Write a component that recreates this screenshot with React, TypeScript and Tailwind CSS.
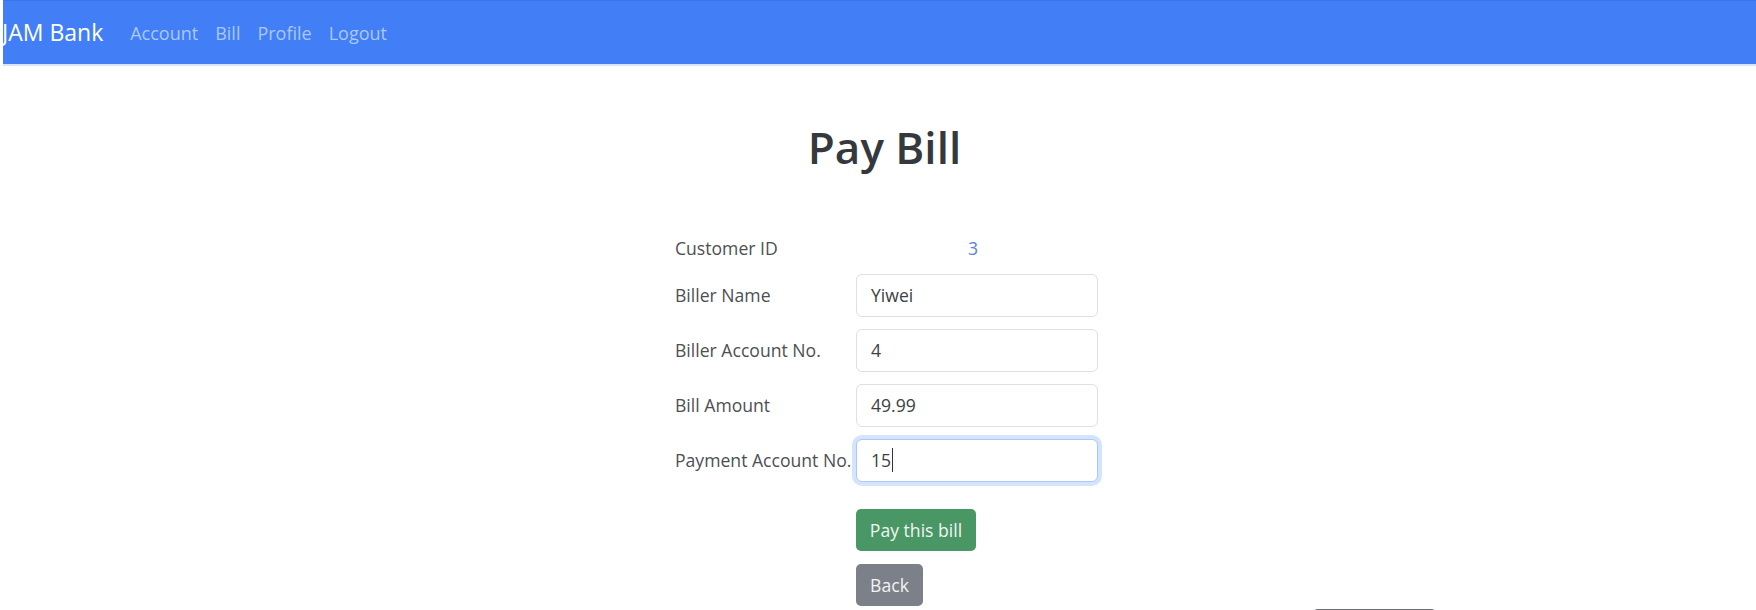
import React from "react";

const font = { fontFamily: '"Open Sans", "Noto Sans", "Liberation Sans", sans-serif' };

function Field({ label, value, focused }: { label: string; value: string; focused?: boolean }) {
  return (
    <div className="flex items-center h-[43px]">
      <div className="w-[181px] text-[17.6px] text-[#4d4f52] whitespace-nowrap">{label}</div>
      <div
        className={
          "w-[242px] h-[43px] rounded-[6px] bg-white flex items-center pl-[14px] text-[17.6px] text-[#3c3f43] " +
          (focused
            ? "border border-[#a9c8f8] shadow-[0_0_0_4px_rgba(66,133,244,0.22)]"
            : "border border-[#dde0e4]")
        }
      >
        <span>{value}</span>
        {focused && <span className="inline-block w-px h-[24px] bg-[#333] ml-px" />}
      </div>
    </div>
  );
}

export default function App() {
  return (
    <div className="w-[1756px] h-[610px] overflow-hidden bg-white" style={font}>
      <nav className="ml-[3px] h-[64px] bg-[#427ff7] flex items-center overflow-hidden border-t border-[#3b74e0]">
        <span className="text-[23px] text-white ml-[-1px] mr-[27px] leading-none">JAM Bank</span>
        <div className="flex items-center text-[18px] text-[#abc8fb] gap-[17px] mt-[1px]">
          <span>Account</span>
          <span>Bill</span>
          <span>Profile</span>
          <span>Logout</span>
        </div>
      </nav>
      <div className="h-[2px] ml-[3px] bg-[#d7e6fa]" />
      <h1 className="mt-[55px] text-center pl-[13px] text-[44px] leading-[1.2] font-semibold text-[#35383d]">
        Pay Bill
      </h1>
      <div className="ml-[675px] mt-[61px] w-[423px] flex flex-col">
        <div className="flex items-center h-[27px] text-[17.6px]">
          <div className="w-[181px] text-[#4d4f52]">Customer ID</div>
          <div className="w-[242px] pl-[112px] text-[#5b82d8]">3</div>
        </div>
        <div className="flex flex-col gap-[12px] mt-[12px]">
          <Field label="Biller Name" value="Yiwei" />
          <Field label="Biller Account No." value="4" />
          <Field label="Bill Amount" value="49.99" />
          <Field label="Payment Account No." value="15" focused />
        </div>
        <div className="ml-[181px] mt-[27px] flex flex-col items-start gap-[13px]">
          <button className="h-[42px] w-[120px] rounded-[5px] bg-[#489764] text-[#f2f5f3] text-[17.6px]">
            Pay this bill
          </button>
          <button className="h-[42px] w-[67px] rounded-[5px] bg-[#7c8189] text-[#f2f3f4] text-[17.6px]">
            Back
          </button>
        </div>
      </div>
      <div className="ml-[1312px] mt-[3px] w-[125px] h-[40px] rounded-[6px] bg-[#4a4d52] border-t border-[#6c6f73]" />
    </div>
  );
}
